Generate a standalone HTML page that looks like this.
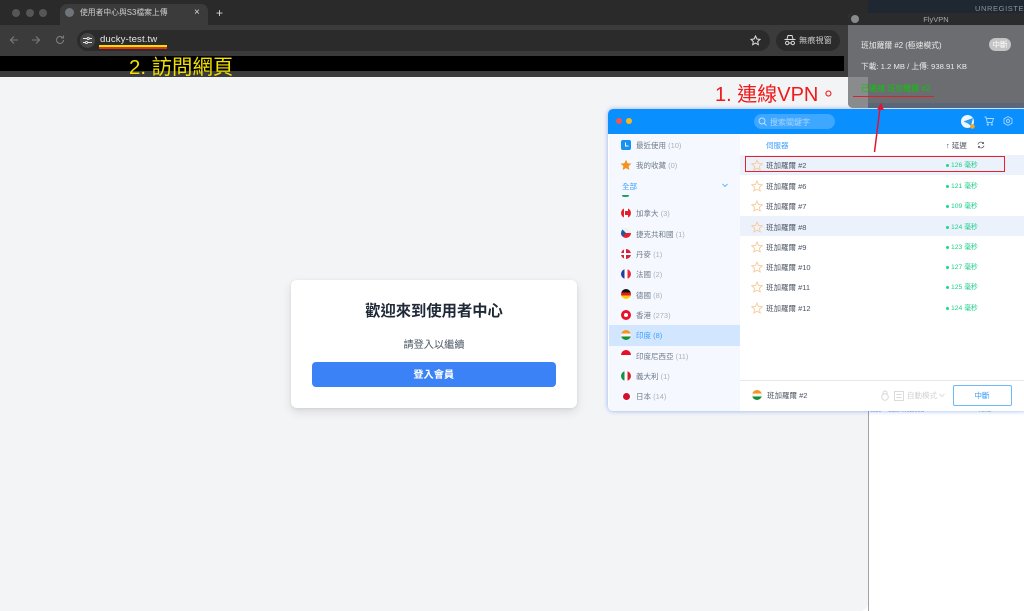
<!DOCTYPE html>
<html lang="zh-TW"><head><meta charset="utf-8"><title>使用者中心與S3檔案上傳</title>
<style>
html,body{margin:0;padding:0;width:1024px;height:611px;overflow:hidden;background:#fff}
body{position:relative;font-family:"Liberation Sans","Noto Sans CJK TC",sans-serif}
.a{position:absolute}
.t{position:absolute;white-space:nowrap;line-height:12px}
.side{font-size:7.5px;color:#6f7a88;left:636px;margin-top:1px}
.side i{font-style:normal;color:#a9b1bb}
.sv{font-size:7.5px;color:#4b5563;left:766px;margin-top:1px}
.ms{font-size:6.8px;color:#1fd08a;left:951px;margin-top:1px}
.dot{position:absolute;left:946px;width:3px;height:3px;border-radius:50%;background:#19d98b}
.flag{position:absolute;left:621px;width:10px;height:10px;border-radius:50%;overflow:hidden}
.star{position:absolute;left:751px;width:12px;height:12px}
.sr{position:absolute;left:740px;width:284px;height:20.4px;background:#ecf2fc}
</style></head><body>

<!-- desktop right side -->
<div class="a" style="left:868px;top:0;width:156px;height:77px;background:#1f2733"></div>
<div class="t" style="left:975px;top:3px;font-size:7.5px;color:#8a929c;letter-spacing:.6px">UNREGISTERED</div>
<div class="a" style="left:868px;top:77px;width:156px;height:534px;background:#fff"></div>
<div class="a" style="left:868px;top:411px;width:1px;height:200px;background:#a3a3a3"></div>
<div class="t" style="left:870px;top:405px;font-size:6px;color:#9aa0a8">Size &nbsp;&nbsp; Last modified &nbsp;&nbsp;&nbsp;&nbsp;&nbsp;&nbsp;&nbsp;&nbsp;&nbsp;&nbsp;&nbsp;&nbsp;&nbsp;&nbsp;&nbsp;&nbsp;&nbsp;&nbsp;&nbsp;&nbsp;&nbsp;&nbsp;&nbsp;&nbsp;&nbsp;&nbsp;&nbsp;&nbsp;&nbsp;&nbsp;&nbsp;&nbsp;Kind</div>

<!-- browser window -->
<div class="a" style="left:0;top:0;width:868px;height:611px;background:#f3f4f6;border-radius:0 0 8px 0;overflow:hidden">
  <div class="a" style="left:0;top:0;width:868px;height:26px;background:#2a2a2a"></div>
  <div class="a" style="left:0;top:25px;width:868px;height:52px;background:#3b3b3b"></div>
  <div class="a" style="left:0;top:56px;width:844px;height:15px;background:#000"></div>
</div>
<div class="a" style="left:12px;top:8.5px;width:8px;height:8px;border-radius:50%;background:#565656"></div>
<div class="a" style="left:26px;top:8.5px;width:8px;height:8px;border-radius:50%;background:#565656"></div>
<div class="a" style="left:39px;top:8.5px;width:8px;height:8px;border-radius:50%;background:#565656"></div>
<!-- tab -->
<div class="a" style="left:60px;top:4px;width:148px;height:22px;background:#3b3b3b;border-radius:7px 7px 0 0"></div>
<div class="a" style="left:65px;top:8px;width:9px;height:9px;border-radius:50%;background:#70757c"></div>
<div class="t" style="left:80px;top:7px;font-size:7.8px;color:#d0d0d0">使用者中心與S3檔案上傳</div>
<div class="t" style="left:194px;top:6.5px;font-size:10px;color:#d8d8d8">×</div>
<div class="t" style="left:216px;top:6.5px;font-size:12px;color:#d8d8d8">+</div>
<!-- toolbar -->
<svg class="a" style="left:8px;top:33px" width="60" height="14" viewBox="0 0 60 14" fill="none" stroke="#7b7b7b" stroke-width="1.1">
  <path d="M10 7H3M6 3.5 2.5 7 6 10.5"/><path d="M24 7h7M28 3.5 31.5 7 28 10.5"/>
  <path d="M55.5 7a3.500 3.500 0 1 1-1-2.500M55.500 2.500v2.500h-2.500"/>
</svg>
<div class="a" style="left:77px;top:30px;width:693px;height:21px;border-radius:11px;background:#2b2b2b"></div>
<div class="a" style="left:80px;top:33px;width:15px;height:15px;border-radius:50%;background:#454545"></div>
<svg class="a" style="left:83px;top:36px" width="9" height="9" viewBox="0 0 9 9" fill="none" stroke="#e4e4e4" stroke-width=".9"><path d="M0 2.500h4M6.500 2.500H9M0 6.500h2M5 6.500h4"/><circle cx="5.200" cy="2.500" r="1.100"/><circle cx="3.500" cy="6.500" r="1.100"/></svg>
<div class="t" style="left:100px;top:33.500px;font-size:9.600px;color:#e6e6e6;letter-spacing:.1px">ducky-test.tw</div>
<div class="a" style="left:99px;top:45px;width:68px;height:2px;background:#f2e100"></div>
<div class="a" style="left:99px;top:47px;width:68px;height:1.500px;background:#e0301e"></div>
<svg class="a" style="left:750px;top:35px" width="11" height="11" viewBox="0 0 11 11" fill="none" stroke="#e0e0e0" stroke-width="1"><path d="M5.500 1 6.900 4 10 4.400 7.700 6.500 8.300 9.700 5.500 8.100 2.700 9.700 3.300 6.500 1 4.400 4.100 4Z"/></svg>
<div class="a" style="left:776px;top:30px;width:64px;height:21px;border-radius:11px;background:#2b2b2b"></div>
<svg class="a" style="left:784px;top:34px" width="12" height="12" viewBox="0 0 12 12" fill="none" stroke="#dcdcdc" stroke-width="1"><path d="M3 5 4 1.500h4L9 5M.5 5.500h11"/><circle cx="3.200" cy="9" r="1.700"/><circle cx="8.800" cy="9" r="1.700"/><path d="M4.900 9h2.200"/></svg>
<div class="t" style="left:799px;top:34.500px;font-size:8.200px;color:#c8c8c8">無痕視窗</div>
<div class="t" style="left:129px;top:57px;font-size:20.400px;line-height:22px;color:#f2e100">2. 訪問網頁</div>

<!-- login card -->
<div class="a" style="left:291px;top:280px;width:286px;height:128px;background:#fff;border-radius:6px;box-shadow:0 4px 10px rgba(0,0,0,.10),0 1px 3px rgba(0,0,0,.07)"></div>
<div class="t" style="left:291px;width:286px;text-align:center;top:303px;font-size:15.300px;line-height:18px;font-weight:700;color:#1f2937">歡迎來到使用者中心</div>
<div class="t" style="left:291px;width:286px;text-align:center;top:339px;font-size:10.200px;line-height:14px;color:#4b5563">請登入以繼續</div>
<div class="a" style="left:311.500px;top:362px;width:244.500px;height:25px;border-radius:4px;background:#3b82f6"></div>
<div class="t" style="left:311.500px;width:244.500px;text-align:center;top:369px;font-size:10.200px;line-height:14px;font-weight:700;color:#fff">登入會員</div>

<!-- FlyVPN app -->
<div class="a" style="left:608px;top:109px;width:420px;height:302px;background:#fff;border-radius:5px;box-shadow:0 0 5px rgba(60,120,240,.55);overflow:hidden">
  <div class="a" style="left:0;top:0;width:420px;height:25px;background:#0a8fff"></div>
  <div class="a" style="left:1px;top:25px;width:131px;height:277px;background:#f5f9ff"></div>
  <div class="a" style="left:1px;top:216px;width:131px;height:21px;background:#d3e6ff"></div>
</div>
<div class="a" style="left:616px;top:118px;width:6px;height:6px;border-radius:50%;background:#f4564f"></div>
<div class="a" style="left:626px;top:118px;width:6px;height:6px;border-radius:50%;background:#f6b81f"></div>
<div class="a" style="left:754px;top:114px;width:81px;height:15px;border-radius:8px;background:#3ea7ff"></div>
<svg class="a" style="left:758px;top:117px" width="9" height="9" viewBox="0 0 9 9" fill="none" stroke="#bfe0ff" stroke-width="1"><circle cx="4" cy="4" r="3"/><path d="M6.200 6.200 8.500 8.500"/></svg>
<div class="t" style="left:770px;top:117px;font-size:8px;color:#a9d6ff">搜索關鍵字</div>
<div class="a" style="left:961px;top:115px;width:13px;height:13px;border-radius:50%;background:#eef6ff"></div>
<svg class="a" style="left:962px;top:116px" width="14" height="14" viewBox="0 0 14 14"><path d="M1.500 5.500 11 2 9 10 6 7.500Z" fill="#2a9df4"/><circle cx="10.500" cy="10.500" r="2.300" fill="#f5a623"/></svg>
<svg class="a" style="left:984px;top:116px" width="10" height="10" viewBox="0 0 10 10" fill="none" stroke="#a8d6ff" stroke-width=".9"><path d="M.5 1h1.500l1.200 5.500h5L9.500 2.500H2.500"/><circle cx="3.800" cy="8.500" r=".7"/><circle cx="7.800" cy="8.500" r=".7"/></svg>
<svg class="a" style="left:1003px;top:116px" width="10" height="10" viewBox="0 0 10 10" fill="none" stroke="#a8d6ff" stroke-width=".9"><path d="M5 .6 9 2.800v4.400L5 9.400 1 7.200V2.800Z"/><circle cx="5" cy="5" r="1.500"/></svg>

<!-- sidebar -->
<div class="a" style="left:621px;top:140px;width:10px;height:10px;border-radius:2px;background:#1493f5"></div>
<svg class="a" style="left:621px;top:140px" width="10" height="10" fill="none" stroke="#fff" stroke-width="1"><path d="M4.500 2.500v3.500H7.500"/></svg>
<div class="t side" style="top:139px">最近使用 <i>(10)</i></div>
<svg class="a" style="left:620px;top:159px" width="12" height="12" viewBox="0 0 12 12"><path fill="#f5921e" d="M6 .7 7.600 4.200 11.400 4.600 8.600 7.200 9.400 11 6 9.100 2.600 11 3.400 7.200.6 4.600 4.400 4.200Z"/></svg>
<div class="t side" style="top:159px">我的收藏 <i>(0)</i></div>
<div class="t" style="left:622px;top:181px;font-size:7.500px;color:#3aa0ff">全部</div>
<svg class="a" style="left:722px;top:183px" width="6" height="5" fill="none" stroke="#5cb0f5" stroke-width=".9"><path d="M.5 1 3 3.500 5.500 1"/></svg>
<div class="a" style="left:622px;top:195px;width:7px;height:2px;background:#22a35a;border-radius:0 0 4px 4px"></div>

<div class="flag" style="top:208px;background:linear-gradient(90deg,#e5202e 0 28%,#fff 28% 72%,#e5202e 72%)"><div class="a" style="left:3.500px;top:3px;width:3px;height:4px;background:#e5202e"></div></div>
<div class="t side" style="top:207px">加拿大 <i>(3)</i></div>
<div class="flag" style="top:228px;background:linear-gradient(180deg,#f0f0f0 0 50%,#e5202e 50%)"><svg class="a" style="left:0;top:0" width="10" height="10"><path d="M0 0 5 5 0 10Z" fill="#1d5aa6"/></svg></div>
<div class="t side" style="top:228px">捷克共和國 <i>(1)</i></div>
<div class="flag" style="top:249px;background:#d8203a"><div class="a" style="left:3px;top:0;width:1.500px;height:10px;background:#fff"></div><div class="a" style="left:0;top:4.200px;width:10px;height:1.500px;background:#fff"></div></div>
<div class="t side" style="top:248px">丹麥 <i>(1)</i></div>
<div class="flag" style="top:269px;background:linear-gradient(90deg,#1f3fa0 0 33%,#fff 33% 66%,#ee2a35 66%)"></div>
<div class="t side" style="top:268px">法國 <i>(2)</i></div>
<div class="flag" style="top:289px;background:linear-gradient(180deg,#111 0 33%,#dd1f26 33% 66%,#fc0 66%)"></div>
<div class="t side" style="top:289px">德國 <i>(8)</i></div>
<div class="flag" style="top:310px;background:#e8102a"><div class="a" style="left:3px;top:3px;width:4px;height:4px;background:#fff;border-radius:50%"></div></div>
<div class="t side" style="top:309px">香港 <i>(273)</i></div>
<div class="flag" style="top:330px;background:linear-gradient(180deg,#f7931e 0 33%,#f4f4f4 33% 66%,#14912f 66%)"></div>
<div class="t side" style="top:329px;color:#3aa0ff">印度 <i style="color:#3aa0ff">(8)</i></div>
<div class="flag" style="top:350px;background:linear-gradient(180deg,#e5102a 0 50%,#fff 50%)"></div>
<div class="t side" style="top:350px">印度尼西亞 <i>(11)</i></div>
<div class="flag" style="top:371px;background:linear-gradient(90deg,#139248 0 33%,#fff 33% 66%,#d8232f 66%)"></div>
<div class="t side" style="top:370px">義大利 <i>(1)</i></div>
<div class="a" style="left:622.500px;top:392.500px;width:7px;height:7px;border-radius:50%;background:#d3102e;box-shadow:0 0 0 1.500px #fff"></div>
<div class="t side" style="top:390px">日本 <i>(14)</i></div>

<!-- server list -->
<div class="t" style="left:766px;top:140px;font-size:7.500px;color:#3aa0ff">伺服器</div>
<div class="t" style="left:946px;top:140px;font-size:7.500px;color:#4b5563">↑ 延遲</div>
<svg class="a" style="left:977px;top:141px" width="8" height="8" viewBox="0 0 8 8" fill="none" stroke="#4b5563" stroke-width=".7"><path d="M1 3.500A3 3 0 0 1 6.500 2.500M7 4.500A3 3 0 0 1 1.500 5.500M6.500 1v1.600H5M1.500 7V5.400H3"/></svg>
<div class="sr" style="top:155px"></div>
<div class="sr" style="top:216px"></div>
<div class="a" style="left:745px;top:156px;width:258px;height:14px;border:1.300px solid #e8202e"></div>

<svg width="0" height="0" style="position:absolute"><defs><path id="s" d="M6 1 7.500 4.400 11.200 4.800 8.400 7.300 9.200 11 6 9.100 2.800 11 3.600 7.300.8 4.800 4.500 4.400Z" fill="none" stroke="#f8c999" stroke-width=".9"/></defs></svg>
<svg class="star" style="top:159px"><use href="#s"/></svg><div class="t sv" style="top:159px">班加羅爾 #2</div><div class="dot" style="top:164px"></div><div class="t ms" style="top:159px">126 毫秒</div>
<svg class="star" style="top:180px"><use href="#s"/></svg><div class="t sv" style="top:180px">班加羅爾 #6</div><div class="dot" style="top:185px"></div><div class="t ms" style="top:180px">121 毫秒</div>
<svg class="star" style="top:200px"><use href="#s"/></svg><div class="t sv" style="top:200px">班加羅爾 #7</div><div class="dot" style="top:205px"></div><div class="t ms" style="top:200px">109 毫秒</div>
<svg class="star" style="top:221px"><use href="#s"/></svg><div class="t sv" style="top:221px">班加羅爾 #8</div><div class="dot" style="top:226px"></div><div class="t ms" style="top:221px">124 毫秒</div>
<svg class="star" style="top:241px"><use href="#s"/></svg><div class="t sv" style="top:241px">班加羅爾 #9</div><div class="dot" style="top:246px"></div><div class="t ms" style="top:241px">123 毫秒</div>
<svg class="star" style="top:261px"><use href="#s"/></svg><div class="t sv" style="top:261px">班加羅爾 #10</div><div class="dot" style="top:266px"></div><div class="t ms" style="top:261px">127 毫秒</div>
<svg class="star" style="top:281px"><use href="#s"/></svg><div class="t sv" style="top:281px">班加羅爾 #11</div><div class="dot" style="top:286px"></div><div class="t ms" style="top:281px">125 毫秒</div>
<svg class="star" style="top:302px"><use href="#s"/></svg><div class="t sv" style="top:302px">班加羅爾 #12</div><div class="dot" style="top:307px"></div><div class="t ms" style="top:302px">124 毫秒</div>

<!-- footer -->
<div class="a" style="left:740px;top:380px;width:284px;height:1px;background:#e8e8e8"></div>
<div class="flag" style="left:752px;top:390px;background:linear-gradient(180deg,#f7931e 0 33%,#f4f4f4 33% 66%,#14912f 66%)"></div>
<div class="t" style="left:767px;top:390px;font-size:7.500px;color:#4b5563">班加羅爾 #2</div>
<svg class="a" style="left:880px;top:390px" width="10" height="11" viewBox="0 0 10 11" fill="none" stroke="#d8d8d8" stroke-width="1"><circle cx="5" cy="7" r="3.300"/><path d="M3 4.500V3a2 2 0 0 1 4 0v1.500"/></svg>
<svg class="a" style="left:894px;top:391px" width="10" height="10" viewBox="0 0 10 10" fill="none" stroke="#d8d8d8" stroke-width=".9"><rect x=".5" y=".5" width="9" height="9"/><path d="M2.500 3.500h5M2.500 6.500h5"/></svg>
<div class="t" style="left:907px;top:390px;font-size:7.500px;color:#d0d0d0">自動模式</div>
<svg class="a" style="left:939px;top:393px" width="6" height="5" fill="none" stroke="#d5d5d5" stroke-width=".8"><path d="M.5 1 3 3.500 5.500 1"/></svg>
<div class="a" style="left:952.500px;top:385px;width:57px;height:19px;border:1px solid #6bb8fb;border-radius:2px"></div>
<div class="t" style="left:952.500px;width:59px;text-align:center;top:390px;font-size:7.500px;color:#2f9cf6">中斷</div>

<!-- FlyVPN popup -->
<div class="a" style="left:848px;top:13px;width:176px;height:95px;background:#6b6d70;border-radius:5px 0 0 5px;overflow:hidden">
  <div class="a" style="left:0;top:0;width:176px;height:12px;background:#2a2b2d"></div>
  <div class="a" style="left:0;top:64px;width:20px;height:31px;background:#8a8b8d"></div>
  <div class="a" style="left:20px;top:90px;width:156px;height:5px;background:#5b6778"></div>
</div>
<div class="a" style="left:851px;top:15px;width:8px;height:8px;border-radius:50%;background:#8a8a8a"></div>
<div class="t" style="left:848px;width:176px;text-align:center;top:13.500px;font-size:7.500px;color:#a8a8a8">FlyVPN</div>
<div class="t" style="left:861px;top:40px;font-size:7.800px;color:#ececec">班加羅爾 #2 (極速模式)</div>
<div class="a" style="left:989px;top:38px;width:22px;height:13px;border-radius:7px;background:#c4c4c4"></div>
<div class="t" style="left:989px;width:22px;text-align:center;top:38.500px;font-size:7.500px;color:#fff">中斷</div>
<div class="t" style="left:861px;top:61px;font-size:7.700px;color:#ececec">下載: 1.2 MB / 上傳: 938.91 KB</div>
<div class="t" style="left:861px;top:83px;font-size:8px;color:#0fc40f">已連線 班加羅爾 #2</div>
<div class="a" style="left:853px;top:96px;width:81px;height:1px;background:#d8232a"></div>

<!-- annotations -->
<div class="t" style="left:715px;top:84px;font-size:20px;line-height:22px;color:#f01a1a">1. 連線VPN。</div>
<svg class="a" style="left:868px;top:102px" width="16" height="52" viewBox="0 0 16 52"><path d="M6.500 50 12 6" stroke="#e8102a" stroke-width="1.500" fill="none"/><path d="M13 1 16 8 9 7.500Z" fill="#e8102a"/></svg>
</body></html>
